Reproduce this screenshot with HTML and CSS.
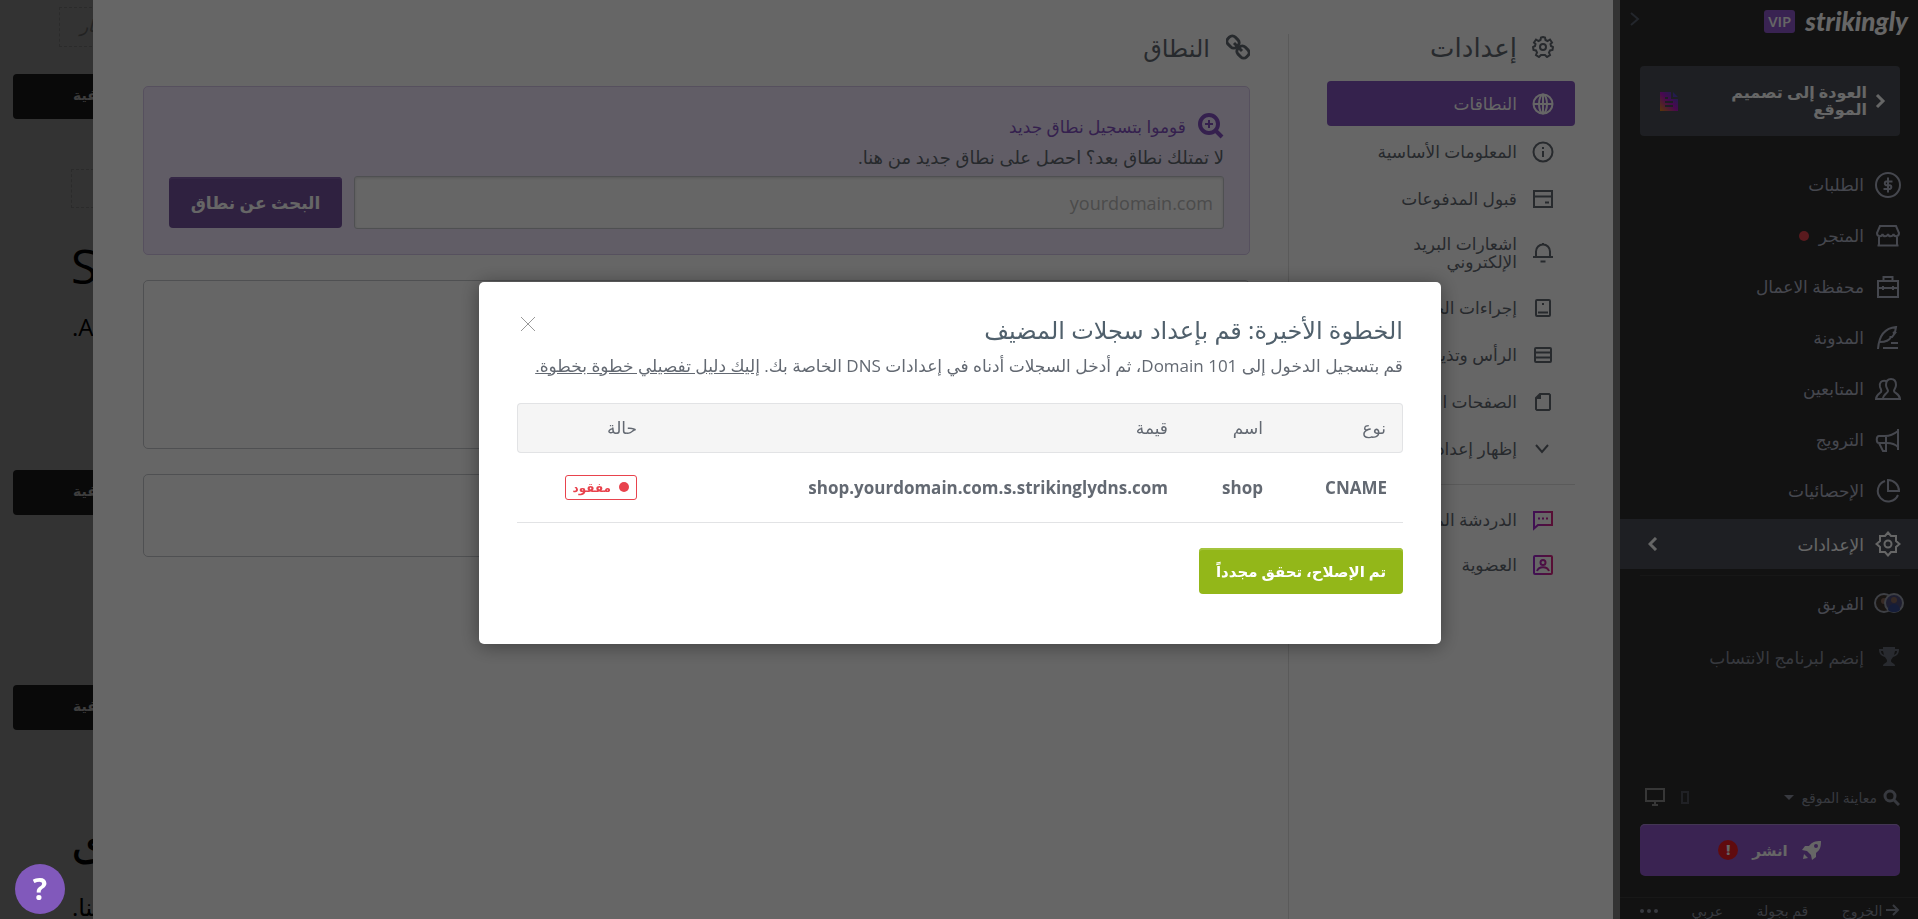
FILE: index.html
```html
<!DOCTYPE html>
<html lang="ar" dir="rtl">
<head>
    <meta charset="UTF-8">
    <meta name="viewport" content="width=device-width, initial-scale=1.0">
    <title>إعدادات - النطاق</title>
    <link rel="stylesheet" href="styles.css">
</head>
<body>
    <div class="app">
        <!-- Main sidebar -->
        <aside class="sidebar">
            <div class="brand">
                <span class="brand-name">strikingly</span>
                <span class="vip">VIP</span>
                <button class="collapse" aria-label="طي القائمة">
                    <svg width="10" height="16" viewBox="0 0 10 16"><path d="M1 2l7 6-7 6"/></svg>
                </button>
            </div>

            <a class="back" href="#">
                <svg class="back-arrow" width="11" height="16" viewBox="0 0 11 16"><path d="M2 2l6 6-6 6"/></svg>
                <span class="back-text">العودة إلى تصميم الموقع</span>
                <svg class="back-page" width="18" height="19" viewBox="0 0 18 19">
                    <defs>
                        <linearGradient id="page-fill" x1="0" y1="1" x2="1" y2="0">
                            <stop offset="0" stop-color="#e08a10"/>
                            <stop offset="0.5" stop-color="#b414c8"/>
                            <stop offset="1" stop-color="#2860c0"/>
                        </linearGradient>
                    </defs>
                    <path fill="url(#page-fill)" d="M0 0h11v7h7v12H0zM13 0l5 5h-5z"/>
                    <path stroke="#4b4e58" stroke-width="2" d="M5 6h3M5 10h8M5 14h8"/>
                </svg>
            </a>

            <nav class="menu">
                <a href="#"><svg class="ico" viewBox="0 0 26 26"><circle cx="13" cy="13" r="12"/><path d="M17.500 9.500H11a2 2 0 0 0 0 3.700h4a2 2 0 0 1 0 3.800H8.500M13 5.500v15"/></svg><span>الطلبات</span></a>
                <a href="#"><svg class="ico" viewBox="0 0 26 26"><path d="M5 3h16l3 7c0 4-5 4-5.500 1-1 3-5 3-5.500 0-1 3-5 3-5.500 0C7 14 2 14 2 10zM4 13v9.500M22 13v9.500M2.500 22.500h21"/></svg><span>المتجر</span><i class="dot"></i></a>
                <a href="#"><svg class="ico" viewBox="0 0 26 26"><path d="M3 7h20v16H3zM8.500 7V3h9v4M3 14h20M8 12v4M18 12v4"/></svg><span>محفظة الاعمال</span></a>
                <a href="#"><svg class="ico" viewBox="0 0 26 26"><path d="M3 24C4 10 10 3 21 2l-1 5-2 1h2l-3 4h-2.500 1.500c-2 4-6 5-11 5M16 18h7M8 23h15"/></svg><span>المدونة</span></a>
                <a href="#"><svg class="ico" viewBox="0 0 26 26"><path d="M16 3c4 0 5 3 5 6s-2 4-2 6 6 3 6 8H8c0-5 5-6 5-8s-2-3-2-6 1-6 5-6zM11 5C6 4 4 7 5 11c1 3 2 3 1 5-1 1-5 3-5 7h7"/></svg><span>المتابعين</span></a>
                <a href="#"><svg class="ico" viewBox="0 0 26 26"><path d="M23 2v21M23 4c-5 4-8 5-13 5H4c-3 0-3 7 0 7h8c4 0 8 1 11 4M4 16l4 8h3v-8M11 16V9"/></svg><span>الترويج</span></a>
                <a href="#"><svg class="ico" viewBox="0 0 26 26"><path d="M10 3a10.500 10.500 0 1 0 13 14M13 2v11h11A11 11 0 0 0 13 2z"/></svg><span>الإحصائيات</span></a>
                <a class="active" href="#"><svg class="ico" viewBox="0 0 26 26"><path d="M13 1.500l3 3.500h5v5l3.500 3-3.500 3v5h-5l-3 3.500L10 21H5v-5l-3.500-3L5 10V5h5z"/><circle cx="13" cy="13" r="3.500"/></svg><span>الإعدادات</span><svg class="open" width="10" height="14" viewBox="0 0 10 14"><path d="M8 1L2 7l6 6"/></svg></a>
            </nav>

            <div class="menu-extra">
                <a class="team" href="#">
                    <svg class="avatars" width="30" height="20" viewBox="0 0 30 20">
                        <circle cx="10" cy="10" r="9" fill="#40352f" stroke="#9ba0ad"/>
                        <circle cx="10" cy="8" r="3" fill="#8a6a5c"/>
                        <circle cx="20" cy="10" r="9" fill="#4c4c78" stroke="#9ba0ad"/>
                        <circle cx="20" cy="7" r="3" fill="#8a6a5c"/>
                        <path fill="#354a90" d="M14 17c1-8 11-8 12 0-3 3-9 3-12 0z"/>
                    </svg>
                    <span>الفريق</span>
                </a>
                <a class="affiliate" href="#">
                    <svg class="cup" width="22" height="22" viewBox="0 0 22 22"><path d="M5 1h12v2h4c0 5-2 7-6 8-1 2-2 2-2 4 0 2 4 2 4 5H5c0-3 4-3 4-5 0-2-1-2-2-4C3 10 1 8 1 3h4zM3 5c0 2 1 3 3 4L5 5zm16 0h-2l-1 4c2-1 3-2 3-4z"/></svg>
                    <span>إنضم لبرنامج الانتساب</span>
                </a>
            </div>

            <div class="sidebar-bottom">
                <div class="preview">
                    <svg width="17" height="17" viewBox="0 0 17 17"><circle cx="7" cy="7" r="5"/><path d="M11 11l5 5"/></svg>
                    <a href="#">معاينة الموقع</a>
                    <i class="caret"></i>
                    <svg class="phone" width="8" height="13" viewBox="0 0 8 13"><path d="M1 1h6v11H1z"/></svg>
                    <svg class="screen" width="20" height="18" viewBox="0 0 20 18"><path d="M1 1h18v12H1zM10 13v3M7 17h6"/></svg>
                </div>
                <button class="publish">
                    <svg width="20" height="20" viewBox="0 0 20 20"><path fill="#fff" fill-rule="evenodd" d="M19 1c0 6-1 9-5 12v4l-4 3-1-5-4-4-5-1 3-4h4c3-4 6-5 12-5zm-5 3a2 2 0 1 0 0 4 2 2 0 0 0 0-4zM2 14l4 4-5 1z"/></svg>
                    <span>انشر</span>
                    <b class="alert">!</b>
                </button>
                <div class="links">
                    <a href="#"><svg width="14" height="12" viewBox="0 0 14 12"><path d="M0 6h12M7 1l5 5-5 5"/></svg> الخروج</a>
                    <a href="#">قم بجولة</a>
                    <a href="#">عربي</a>
                    <a class="more" href="#" aria-label="المزيد"><i></i><i></i><i></i></a>
                </div>
            </div>
        </aside>

        <main class="stage">
            <!-- Site being edited, seen beside the settings panel -->
            <div class="site">
                <div class="ghost ghost-logo"><em>شعار</em></div>
                <div class="bg-bar bg-first">الخلفية</div>
                <div class="ghost ghost-empty"></div>
                <p class="site-title">S</p>
                <p class="site-text">A.</p>
                <div class="bg-bar bg-second">الخلفية</div>
                <div class="bg-bar bg-third">الخلفية</div>
                <p class="site-title site-title-ar">ى</p>
                <p class="site-text site-text-ar">تنا.</p>
            </div>

            <div class="panel">
                <nav class="settings">
                    <h2><svg class="sico" viewBox="0 0 22 22"><path d="M11 1l2 .5.500 2.500 2 1 2.500-1.500 2 3L18.500 8l.5 2 2 1-.5 3-2.500.5-1 2 1 2.500-3 2-2-2h-4l-2 2-3-2L5 16.500l-1-2L1.500 14 1 11l2-1 .5-2L2 6.500l2-3L6.500 5l2-1L9 1.500z"/><circle cx="11" cy="11" r="3"/></svg><span>إعدادات</span></h2>
                    <a class="current" href="#"><svg class="sico" viewBox="0 0 22 22"><circle cx="11" cy="11" r="9.500"/><ellipse cx="11" cy="11" rx="4" ry="9.500"/><path d="M1.500 11h19M11 1.500v19"/></svg><span>النطاقات</span></a>
                    <a href="#"><svg class="sico" viewBox="0 0 22 22"><circle cx="11" cy="11" r="9.500"/><path d="M11 10v6M11 6v2"/></svg><span>المعلومات الأساسية</span></a>
                    <a href="#"><svg class="sico" viewBox="0 0 22 22"><path d="M2 3h18v16H2zM2 8.500h18M13 14.500h4"/></svg><span>قبول المدفوعات</span></a>
                    <a class="tall" href="#"><svg class="sico" viewBox="0 0 22 22"><path d="M1 15h20M4 15V9.500a7 7 0 0 1 14 0V15M11 1v2M8.500 19.500h5"/></svg><span>اشعارات البريد الإلكتروني</span></a>
                    <a href="#"><svg class="sico" viewBox="0 0 22 22"><rect x="4" y="3" width="14" height="16" rx="1"/><path d="M6 15.500h10M10 7h2"/></svg><span>إجراءات الجمهور</span></a>
                    <a href="#"><svg class="sico" viewBox="0 0 22 22"><rect x="3" y="4" width="16" height="14" rx="1"/><path d="M3 8.500h16M3 13.500h16"/></svg><span>الرأس وتذييل الصفحة</span></a>
                    <a href="#"><svg class="sico" viewBox="0 0 22 22"><path d="M8 3h9l1 1v14l-1 1H5l-1-1V7zM8 3v4H4"/></svg><span>الصفحات القانونية</span></a>
                    <a href="#"><svg class="sico" viewBox="0 0 22 22"><path d="M4 7l6 7 6-7"/></svg><span>إظهار إعدادات متقدمة</span></a>
                    <hr>
                    <a class="extra" href="#"><svg class="sico pink" viewBox="0 0 22 22">
                        <defs><linearGradient id="pink" x1="0" x2="22" y1="0" y2="0" gradientUnits="userSpaceOnUse"><stop offset="0" stop-color="#9a28d8"/><stop offset="1" stop-color="#e0257c"/></linearGradient></defs>
                        <path d="M2 3h18v13H6l-4 3.500zM6 9.500h2M10 9.500h2M14 9.500h2"/></svg><span>الدردشة المباشرة</span></a>
                    <a class="extra" href="#"><svg class="sico pink" viewBox="0 0 22 22"><rect x="2" y="2" width="18" height="18" rx="1"/><circle cx="11" cy="8.500" r="2.500"/><path d="M5 17c2-5 10-5 12 0"/></svg><span>العضوية</span></a>
                </nav>

                <section class="domains">
                    <h2><svg width="24" height="26" viewBox="0 0 24 26"><rect x="2" y="2" width="10" height="12" rx="4" transform="rotate(-45 7 8)"/><rect x="12" y="12" width="10" height="12" rx="4" transform="rotate(-45 17 18)"/><path d="M8 9l8 8"/></svg><span>النطاق</span></h2>
                    <form class="register">
                        <h3><svg width="26" height="26" viewBox="0 0 26 26"><circle cx="11" cy="11" r="9"/><path d="M17 17l7 7"/><path class="thin" d="M11 7v8M7 11h8"/></svg><span>قوموا بتسجيل نطاق جديد</span></h3>
                        <label for="domain">لا تمتلك نطاق بعد؟ احصل على نطاق جديد من هنا.</label>
                        <div class="search-row">
                            <input type="text" id="domain" placeholder="yourdomain.com">
                            <button type="button" class="search">البحث عن نطاق</button>
                        </div>
                    </form>
                    <div class="card card-large"></div>
                    <div class="card card-small"></div>
                </section>
            </div>
        </main>
    </div>

    <!-- DNS records dialog -->
    <div class="overlay">
        <div class="modal" role="dialog" aria-labelledby="modal-title">
            <button class="close" aria-label="إغلاق">
                <svg width="16" height="16" viewBox="0 0 16 16"><path d="M1 1l14 14M15 1L1 15"/></svg>
            </button>
            <h1 id="modal-title">الخطوة الأخيرة: قم بإعداد سجلات المضيف</h1>
            <p>قم بتسجيل الدخول إلى Domain 101، ثم أدخل السجلات أدناه في إعدادات DNS الخاصة بك. <a href="#">إليك دليل تفصيلي خطوة بخطوة.</a></p>
            <table>
                <thead>
                    <tr>
                        <th class="col-type">نوع</th>
                        <th class="col-name">اسم</th>
                        <th>قيمة</th>
                        <th class="col-status">حالة</th>
                    </tr>
                </thead>
                <tbody>
                    <tr>
                        <td>CNAME</td>
                        <td>shop</td>
                        <td>shop.yourdomain.com.s.strikinglydns.com</td>
                        <td><span class="missing"><i></i>مفقود</span></td>
                    </tr>
                </tbody>
            </table>
            <button class="recheck">تم الإصلاح، تحقق مجدداً</button>
        </div>
    </div>

    <button class="help" aria-label="مساعدة">?</button>
</body>
</html>
```

FILE: styles.css
```css
* {
    box-sizing: border-box;
}

body {
    margin: 0;
    font-family: "Open Sans", "Noto Sans", "DejaVu Sans", sans-serif;
    font-size: 17px;
    color: #636972;
    background: #808080;
    overflow: hidden;
}

h1, h2, h3, p {
    margin: 0;
}

a {
    color: inherit;
    text-decoration: none;
}

button {
    font-family: inherit;
    border: none;
    cursor: pointer;
}

svg {
    flex: none;
    fill: none;
    stroke: currentColor;
    stroke-width: 2;
}

.app {
    display: flex;
    height: 100vh;
}

/* Sidebar */
.sidebar {
    width: 298px;
    flex: none;
    display: flex;
    flex-direction: column;
    background: #2d2d2d;
    color: #adb1c2;
    overflow: hidden;
}

.brand {
    display: flex;
    align-items: center;
    height: 42px;
    padding: 0 10px;
    margin-bottom: 24px;
}

.brand-name {
    font-family: Lato, sans-serif;
    font-size: 26px;
    font-weight: 900;
    font-style: italic;
    line-height: 40px;
    color: #fff;
}

.vip {
    margin-right: 10px;
    padding: 0 4px;
    border-radius: 3px;
    background: #9058cc;
    color: #fff;
    font-size: 15px;
    font-weight: 600;
    line-height: 23px;
}

.collapse {
    margin-right: auto;
    padding: 0;
    background: none;
    color: #57606e;
}

.back {
    display: flex;
    align-items: center;
    height: 70px;
    margin: 0 18px 23px 20px;
    padding: 0 14px 0 20px;
    border-radius: 4px;
    background: #4b4e58;
    font-size: 16px;
    font-weight: 600;
    line-height: 17px;
    color: #fff;
}

.back-arrow {
    stroke-width: 3;
}

.back-text {
    width: 150px;
    margin-right: 8px;
}

.back-page {
    margin-right: auto;
    stroke: none;
}

.menu a {
    display: flex;
    align-items: center;
    height: 51px;
    padding: 0 17px 0 28px;
    font-weight: 500;
}

.ico {
    width: 26px;
    height: 26px;
    margin-left: 11px;
}

.menu .active {
    height: 50px;
    margin-top: 3px;
    background: #4b4e58;
    color: #fff;
}

.open {
    margin-right: auto;
    stroke-width: 3;
}

.dot {
    width: 10px;
    height: 10px;
    margin-right: 10px;
    border-radius: 50%;
    background: #e0434d;
}

.menu-extra {
    margin: 6px 18px 0 20px;
    border-top: 1px solid #3a3a3a;
}

.menu-extra a {
    display: flex;
    align-items: center;
    height: 54px;
    gap: 10px;
}

.menu-extra .team {
    margin-right: -4px;
}

.team {
    font-weight: 500;
}

.avatars {
    stroke: none;
}

.affiliate {
    color: #8a8f9c;
}

.menu-extra .affiliate {
    gap: 14px;
}

.cup {
    fill: #656a75;
    stroke: none;
}

.sidebar-bottom {
    margin-top: auto;
}

.preview {
    display: flex;
    align-items: center;
    height: 40px;
    margin: 0 18px 7px 25px;
    font-size: 14px;
    color: #8b909d;
}

.preview a {
    margin: 0 6px 0 8px;
}

.caret {
    border: 5px solid transparent;
    border-top-color: #8b909d;
    border-bottom: 0;
}

.phone {
    margin-right: auto;
    color: #50545e;
}

.screen {
    margin-right: 16px;
    color: #8b8b8b;
}

.preview > svg:first-child {
    stroke-width: 3;
}

.publish {
    display: flex;
    align-items: center;
    justify-content: center;
    width: 260px;
    height: 52px;
    margin: 0 18px 21px 20px;
    padding: 0;
    border-radius: 5px;
    background: #9158cd;
    box-shadow: inset 0 1px 0 #a987d0;
    color: #fff;
    font-size: 15px;
    font-weight: 700;
    gap: 14px;
}

.publish svg {
    stroke: none;
}

.alert {
    width: 20px;
    border-radius: 50%;
    background: #f01c24;
    font-size: 14px;
    line-height: 20px;
}

.links {
    display: flex;
    justify-content: space-between;
    height: 22px;
    padding: 0 18px 0 20px;
    border-top: 1px solid #3d3d3d;
    font-size: 14px;
    line-height: 26px;
    color: #8b909d;
    overflow: hidden;
}

.more {
    display: flex;
    gap: 3px;
    padding-top: 11px;
}

.more i {
    width: 4px;
    height: 4px;
    border-radius: 50%;
    background: #8b909d;
}

/* Site behind the panel */
.stage {
    position: relative;
    flex: 1;
    min-width: 0;
}

.site {
    direction: ltr;
    height: 100vh;
    padding: 7px 20px 0 13px;
    overflow: hidden;
    color: #000;
}

.ghost {
    height: 40px;
    margin-left: 46px;
    border: 1px dashed #6c6c6c;
    color: #555;
    line-height: 36px;
}

.ghost-logo {
    padding-left: 20px;
}

.ghost-empty {
    height: 39px;
    margin: 50px 0 28px 58px;
}

.bg-bar {
    height: 45px;
    padding-left: 60px;
    border-radius: 4px;
    background: #171717;
    color: #999;
    font-size: 14px;
    font-weight: 600;
    line-height: 42px;
}

.bg-first {
    margin-top: 27px;
}

.bg-second {
    margin-top: 124px;
}

.bg-third {
    margin-top: 170px;
}

.site-title {
    padding-left: 58px;
    font-size: 48px;
    line-height: 60px;
}

.site-text {
    direction: rtl;
    width: 80px;
    margin-left: 59px;
    padding-top: 12px;
    text-align: left;
    font-size: 24px;
    line-height: 38px;
}

.site-title-ar {
    margin-top: 80px;
}

.site-text-ar {
    padding-top: 18px;
}

/* Settings panel */
.panel {
    position: absolute;
    inset: 0 7px 0 93px;
    display: flex;
    padding-top: 34px;
    background: #fff;
}

.settings {
    flex: none;
    width: 325px;
    padding: 0 38px;
    border-left: 1px solid #e0e0e0;
}

.settings h2,
.domains h2 {
    display: flex;
    align-items: center;
    height: 26px;
    font-size: 26px;
    font-weight: 500;
}

.settings h2 {
    margin-bottom: 21px;
    padding-right: 21px;
}

.settings a {
    display: flex;
    align-items: center;
    height: 47px;
    padding: 0 21px;
    font-weight: 500;
    line-height: 18px;
    white-space: nowrap;
}

.sico {
    width: 22px;
    height: 22px;
    margin-left: 15px;
}

.settings .current {
    height: 45px;
    margin-bottom: 2px;
    border-radius: 4px;
    background: #8455c0;
    color: #fff;
}

.settings .tall {
    height: 62px;
    white-space: normal;
}

.settings .tall span {
    width: 130px;
}

.settings .extra {
    height: 45px;
}

.settings hr {
    height: 1px;
    margin: 12px 0;
    border: none;
    background: #e0e0e0;
}

.pink {
    stroke: url(#pink);
}

.domains {
    flex: 1;
    min-width: 0;
    padding: 0 38px 0 50px;
}

.domains h2 {
    margin-bottom: 26px;
    gap: 16px;
    font-size: 24px;
}

.domains h2 svg {
    stroke-width: 3;
}

.register {
    padding: 24px 25px 25px;
    border: 1px solid #d8c8ec;
    border-radius: 5px;
    background: #f2e9ff;
}

.register h3 {
    display: flex;
    align-items: center;
    height: 30px;
    gap: 12px;
    font-size: 17px;
    font-weight: 500;
    color: #8452c4;
}

.register h3 svg {
    stroke-width: 4;
}

.register h3 .thin {
    stroke-width: 2;
}

.register label {
    display: block;
    height: 35px;
    font-size: 18px;
    line-height: 32px;
}

.search-row {
    display: flex;
    align-items: center;
    gap: 12px;
}

.search-row input {
    flex: 1;
    min-width: 0;
    height: 53px;
    padding: 0 10px;
    border: 1px solid #c6c9cd;
    border-radius: 3px;
    box-shadow: inset 0 1px 3px rgba(0, 0, 0, 0.15);
    font-family: inherit;
    font-size: 18px;
}

.search-row input::placeholder {
    color: #bbb;
}

.search {
    width: 173px;
    height: 51px;
    border-radius: 4px;
    background: #7653a0;
    box-shadow: inset 0 2px 0 #8563ae;
    color: #fff;
    font-size: 17px;
    font-weight: 700;
}

.card {
    border: 1px solid #c6c9cd;
    border-radius: 5px;
}

.card-large {
    height: 169px;
    margin: 25px 0;
}

.card-small {
    height: 83px;
}

/* Dialog */
.overlay {
    position: fixed;
    inset: 0;
    display: grid;
    place-items: center;
    padding: 6px 0 0 2px;
    background: rgba(0, 0, 0, 0.6);
}

.modal {
    position: relative;
    width: 962px;
    max-width: 96vw;
    padding: 30px 38px 50px;
    border-radius: 5px;
    background: #fff;
    box-shadow: 0 2px 20px rgba(0, 0, 0, 0.4);
}

.close {
    position: absolute;
    top: 34px;
    left: 41px;
    padding: 0;
    background: none;
    color: #999;
    line-height: 0;
}

.close svg {
    stroke-width: 1;
}

.modal h1 {
    font-size: 24px;
    font-weight: 500;
    line-height: 36px;
    color: #50606c;
}

.modal p {
    padding-bottom: 19px;
    line-height: 36px;
    white-space: nowrap;
}

.modal p a {
    text-decoration: underline;
}

.modal table {
    width: 100%;
    border-collapse: separate;
    border-spacing: 0;
    table-layout: fixed;
    margin-bottom: 25px;
    text-align: right;
}

.modal th,
.modal td {
    padding: 0 16px 0 0;
    white-space: nowrap;
}

.modal th {
    height: 50px;
    border: solid #e2e3e5;
    border-width: 1px 0;
    background: #f5f5f5;
    font-weight: 500;
}

.modal th:first-child {
    border-right-width: 1px;
    border-radius: 0 4px 4px 0;
}

.modal th:last-child {
    border-left-width: 1px;
    border-radius: 4px 0 0 4px;
}

.modal td {
    height: 70px;
    border-bottom: 1px solid #e2e3e5;
    font-weight: 700;
}

.col-type {
    width: 124px;
}

.col-name {
    width: 95px;
}

.col-status {
    width: 136px;
}

.missing {
    display: inline-flex;
    align-items: center;
    height: 25px;
    gap: 8px;
    padding: 0 7px;
    border: 1px solid #e8434d;
    border-radius: 3px;
    color: #e8434d;
    font-size: 12px;
}

.missing i {
    width: 10px;
    height: 10px;
    border-radius: 50%;
    background: #e8434d;
}

.recheck {
    display: block;
    min-width: 204px;
    height: 46px;
    padding: 0 16px;
    border-radius: 4px;
    background: #93b719;
    box-shadow: inset 0 2px 0 #a4c43d;
    color: #fff;
    font-size: 15px;
    font-weight: 700;
}

.help {
    position: fixed;
    left: 15px;
    bottom: 5px;
    width: 50px;
    height: 50px;
    border-radius: 50%;
    background: #8159bb;
    color: #fff;
    font-size: 30px;
    font-weight: 700;
    line-height: 50px;
    padding: 0;
}
```
